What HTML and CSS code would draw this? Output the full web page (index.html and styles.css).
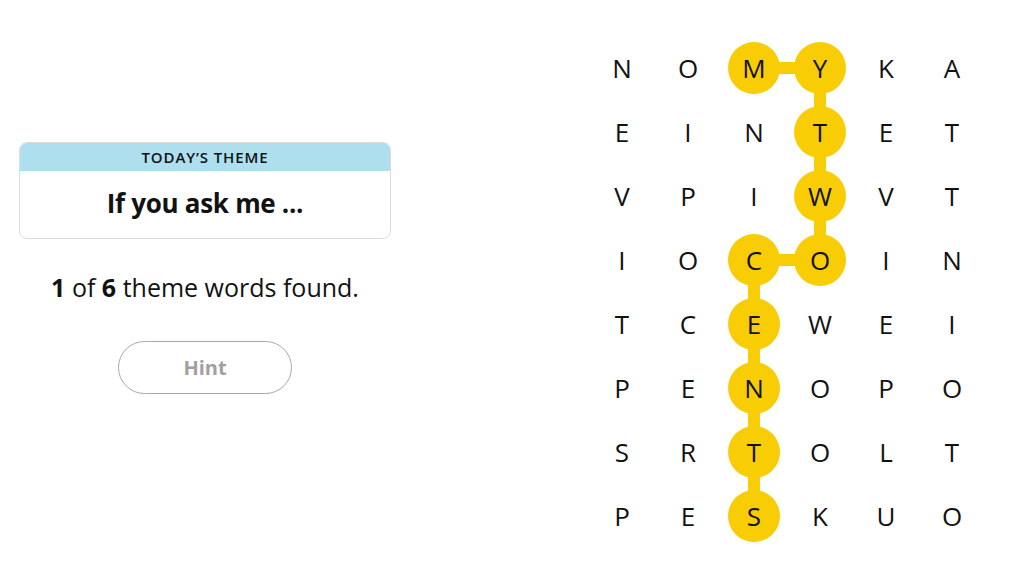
FILE: index.html
```html
<!DOCTYPE html>
<html>
<head>
<meta charset="utf-8">
<link rel="stylesheet" href="styles.css">
</head>
<body>
<main class="page">
  <section class="side">
    <div class="theme-card">
      <div class="theme-head">TODAY’S THEME</div>
      <div class="theme-body">If you ask me ...</div>
    </div>
    <p class="progress"><b>1</b> of <b>6</b> theme words found.</p>
    <button class="hint">Hint</button>
  </section>
  <section class="board">
    <svg class="links" width="396" height="512" viewBox="0 0 396 512">
      <path d="M165 32 H231 V224 H165 V480" fill="none" stroke="#f8cd05" stroke-width="12" stroke-linejoin="round"/>
    </svg>
    <div class="grid">
      <span>N</span><span>O</span><span class="sel">M</span><span class="sel">Y</span><span>K</span><span>A</span>
      <span>E</span><span>I</span><span>N</span><span class="sel">T</span><span>E</span><span>T</span>
      <span>V</span><span>P</span><span>I</span><span class="sel">W</span><span>V</span><span>T</span>
      <span>I</span><span>O</span><span class="sel">C</span><span class="sel">O</span><span>I</span><span>N</span>
      <span>T</span><span>C</span><span class="sel">E</span><span>W</span><span>E</span><span>I</span>
      <span>P</span><span>E</span><span class="sel">N</span><span>O</span><span>P</span><span>O</span>
      <span>S</span><span>R</span><span class="sel">T</span><span>O</span><span>L</span><span>T</span>
      <span>P</span><span>E</span><span class="sel">S</span><span>K</span><span>U</span><span>O</span>
    </div>
  </section>
</main>
</body>
</html>
```
FILE: styles.css
```css
* { box-sizing: border-box; }
html, body { margin: 0; padding: 0; background: #fff; }
body { font-family: "Open Sans", "Liberation Sans", sans-serif; color: #121212; }
.page {
  display: flex;
  width: 1024px;
  height: 576px;
}
.side {
  width: 410px;
  padding-top: 142px;
  display: flex;
  flex-direction: column;
  align-items: center;
}
.theme-card {
  width: 372px;
  border: 1px solid #dcdcdc;
  border-radius: 8px;
  overflow: hidden;
}
.theme-head {
  background: #aedfee;
  height: 28px;
  line-height: 28px;
  text-align: center;
  font-size: 15px;
  font-weight: 600;
  letter-spacing: 0.9px;
}
.theme-body {
  height: 67px;
  line-height: 64px;
  text-align: center;
  font-size: 26px;
  font-weight: 700;
  letter-spacing: -0.3px;
}
.progress {
  margin: 32px 0 0 0;
  font-size: 25px;
  line-height: 32px;
}
.progress b { font-weight: 700; }
.hint {
  margin-top: 38px;
  width: 174px;
  height: 53px;
  border: 1.5px solid #a8a8a8;
  border-radius: 27px;
  background: #fff;
  color: #a0a0a0;
  font-family: "Open Sans", sans-serif;
  font-size: 20px;
  font-weight: 700;
  line-height: 48px;
}
.board {
  position: relative;
  margin-left: 179px;
  margin-top: 36px;
  width: 396px;
  height: 512px;
}
.links { position: absolute; left: 0; top: 0; }
.grid {
  position: relative;
  display: grid;
  grid-template-columns: repeat(6, 66px);
  grid-template-rows: repeat(8, 64px);
}
.grid span {
  display: flex;
  align-items: center;
  justify-content: center;
  font-size: 26px;
  font-weight: 400;
  position: relative;
  z-index: 0;
}
.grid span.sel::before {
  content: "";
  position: absolute;
  left: 7px;
  top: 6px;
  width: 52px;
  height: 52px;
  border-radius: 50%;
  background: #f8cd05;
  z-index: -1;
}
```
